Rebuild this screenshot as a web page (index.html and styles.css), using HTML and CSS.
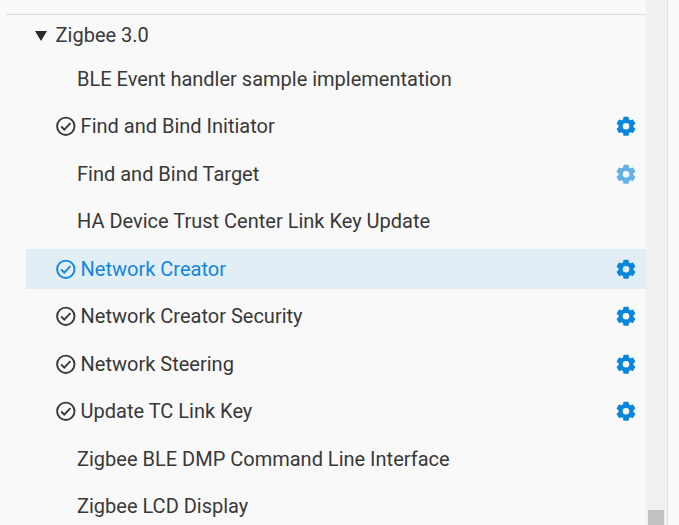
FILE: index.html
```html
<!DOCTYPE html>
<html lang="en">
<head>
<meta charset="utf-8">
<title>Components</title>
<link rel="stylesheet" href="styles.css">
</head>
<body>
<svg class="defs" aria-hidden="true">
  <symbol id="check" viewBox="0 0 20 20">
    <circle cx="9.8" cy="10.3" r="8.7" fill="none" stroke="currentColor" stroke-width="1.9"/>
    <path d="M5.2 10.5l3.1 3.1 6.1-6.4" fill="none" stroke="currentColor" stroke-width="1.9"/>
  </symbol>
  <symbol id="gear" viewBox="0 -.3 20 20">
    <circle cx="10" cy="10" r="5.4" fill="none" stroke="currentColor" stroke-width="4.2"/>
    <g fill="currentColor">
      <path id="teeth" d="M6.9 4.6L7.4.9q.1-.4.5-.4h4.2q.4 0 .5.4l.5 3.7zM6.9 15.4l.5 3.7q.1.4.5.4h4.2q.4 0 .5-.4l.5-3.7z"/>
      <use href="#teeth" transform="rotate(60 10 10)"/>
      <use href="#teeth" transform="rotate(120 10 10)"/>
    </g>
  </symbol>
</svg>
<div class="pane">
  <main class="tree">
    <div class="group">
      <svg class="arrow" viewBox="0 0 12 10"><path d="M0 0h12L6 10z" fill="currentColor"/></svg>
      <span>Zigbee 3.0</span>
    </div>
    <ul class="list">
      <li class="item"><span class="label">BLE Event handler sample implementation</span></li>
      <li class="item installed"><svg class="check"><use href="#check"/></svg><span class="label">Find and Bind Initiator</span><svg class="gear"><use href="#gear"/></svg></li>
      <li class="item"><span class="label">Find and Bind Target</span><svg class="gear faded"><use href="#gear"/></svg></li>
      <li class="item"><span class="label">HA Device Trust Center Link Key Update</span></li>
      <li class="item installed selected"><svg class="check"><use href="#check"/></svg><span class="label">Network Creator</span><svg class="gear"><use href="#gear"/></svg></li>
      <li class="item installed"><svg class="check"><use href="#check"/></svg><span class="label">Network Creator Security</span><svg class="gear"><use href="#gear"/></svg></li>
      <li class="item installed"><svg class="check"><use href="#check"/></svg><span class="label">Network Steering</span><svg class="gear"><use href="#gear"/></svg></li>
      <li class="item installed"><svg class="check"><use href="#check"/></svg><span class="label">Update TC Link Key</span><svg class="gear"><use href="#gear"/></svg></li>
      <li class="item"><span class="label">Zigbee BLE DMP Command Line Interface</span></li>
      <li class="item"><span class="label">Zigbee LCD Display</span></li>
    </ul>
  </main>
  <div class="scrollbar"><div class="thumb"></div></div>
</div>
</body>
</html>
```
FILE: styles.css
```css
* { box-sizing: border-box; }
body {
  margin: 0;
  height: 525px;
  overflow: hidden;
  background: #f9f9f9;
  color: #383838;
  font: 20px/40px Roboto, "Liberation Sans", sans-serif;
}
.defs { position: absolute; width: 0; height: 0; }
.pane { display: flex; height: 525px; }
.tree {
  width: 646px;
  margin-top: 14px;
  padding-left: 6px;
}
.group {
  display: flex;
  align-items: center;
  height: 44.75px;
  padding: 0 0 4px 29px;
  border-top: 1px solid #dcdcdc;
}
.arrow { width: 12px; height: 10px; margin: 3px 8.6px 0 0; color: #2b2b2b; }
.list {
  display: flex;
  flex-direction: column;
  gap: 7.5px;
  margin: 0 0 0 20px;
  padding: 0;
  list-style: none;
}
.item {
  display: flex;
  align-items: center;
  flex: none;
  height: 40px;
  padding: 0 10px 0 51px;
  white-space: nowrap;
}
.item.installed { padding-left: 29.6px; }
.item.selected { background: #e1eef6; color: #1385dc; }
.label { flex: 1; }
.check { width: 20px; height: 20px; margin-right: 5px; }
.gear { width: 20px; height: 20px; color: #0886dc; }
.gear.faded { opacity: .62; }
.scrollbar {
  display: flex;
  flex-direction: column;
  justify-content: flex-end;
  width: 22px;
  padding: 0 3px 0 2px;
  background: #f0f0f0;
  border-right: 1px solid #dedede;
}
.thumb { height: 15px; background: #c1c1c1; }
```
